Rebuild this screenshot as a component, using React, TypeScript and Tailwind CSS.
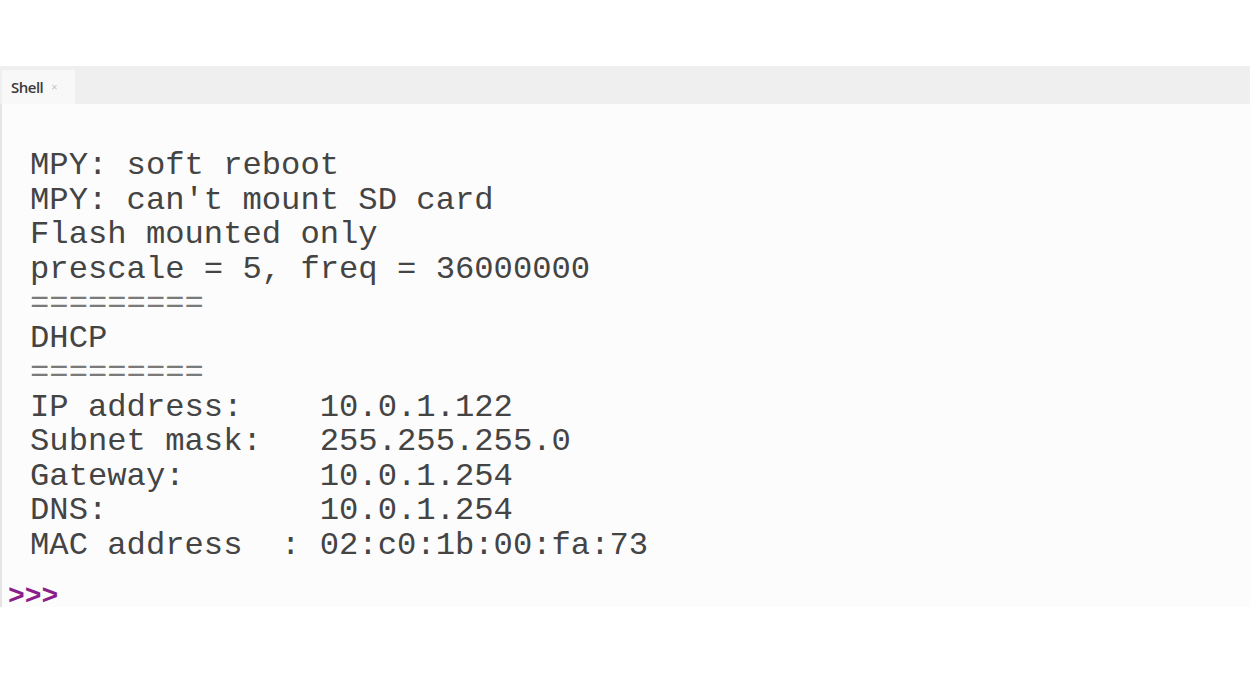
export default function App() {
  const lines = [
    "MPY: soft reboot",
    "MPY: can't mount SD card",
    "Flash mounted only",
    "prescale = 5, freq = 36000000",
    "=========",
    "DHCP",
    "=========",
    "IP address:    10.0.1.122",
    "Subnet mask:   255.255.255.0",
    "Gateway:       10.0.1.254",
    "DNS:           10.0.1.254",
    "MAC address  : 02:c0:1b:00:fa:73",
  ];
  return (
    <div className="w-[1250px] h-[675px] bg-white flex flex-col overflow-hidden">
      <div className="h-[66px] bg-white" />
      <div className="h-[38px] bg-[#efefef] flex items-end pl-[2px]">
        <div className="h-[34px] w-[73px] bg-[#f8f8f8] flex items-center pl-[9px] gap-[8px]" style={{ fontFamily: "'Open Sans', 'Noto Sans', sans-serif" }}>
          <span className="text-[15px] font-semibold text-[#3a3a3a] tracking-[-0.5px]">Shell</span>
          <span className="text-[11px] text-[#c4c4c4]">×</span>
        </div>
      </div>
      <div className="h-[503px] bg-[#fcfcfc] border-l-2 border-[#e4e4e4] pt-[45px]" style={{ fontFamily: "'Liberation Mono', 'Courier New', monospace" }}>
        {lines.map((l, i) => (
          <div
            key={i}
            className={`whitespace-pre text-[32.2px] leading-[34.5px] pl-[28px] ${l.startsWith("=") ? "text-[#7a7a7a]" : "text-[#444444]"}`}
          >
            {l}
          </div>
        ))}
        <div className="pl-[6px] mt-[17px] text-[28px] leading-[34px] font-bold text-[#8a1f8a] whitespace-pre">&gt;&gt;&gt;</div>
      </div>
      <div className="flex-1 bg-white" />
    </div>
  );
}
